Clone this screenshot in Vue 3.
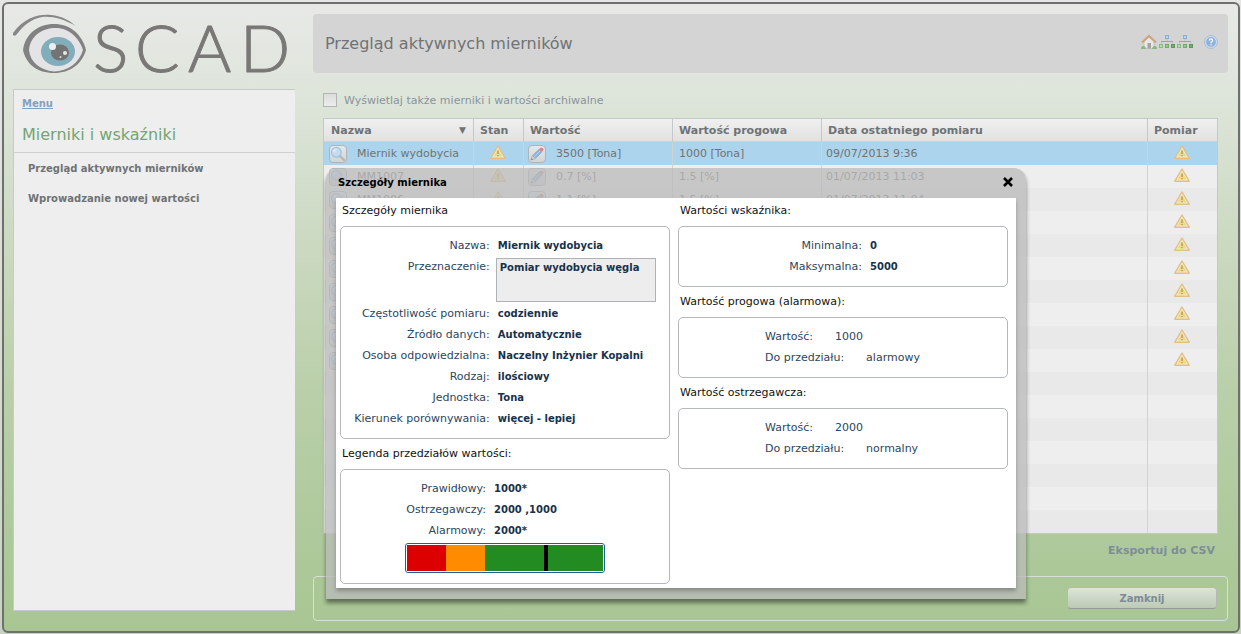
<script setup>
import { ref } from 'vue'

const showArchive = ref(false)
const purpose = ref('Pomiar wydobycia węgla')

const columns = ['Nazwa', 'Stan', 'Wartość', 'Wartość progowa', 'Data ostatniego pomiaru', 'Pomiar']

const measures = [
  { name: 'Miernik wydobycia', value: '3500 [Tona]', limit: '1000 [Tona]', date: '09/07/2013 9:36' },
  { name: 'MM1007', value: '0.7 [%]', limit: '1.5 [%]', date: '01/07/2013 11:03' },
  { name: 'MM1006', value: '1.1 [%]', limit: '1.5 [%]', date: '01/07/2013 11:04' },
  ...Array.from({ length: 7 }, () => ({ name: '', value: '', limit: '', date: '' }))
]
const emptyRows = 7

const details = [
  { label: 'Częstotliwość pomiaru:', value: 'codziennie' },
  { label: 'Źródło danych:', value: 'Automatycznie' },
  { label: 'Osoba odpowiedzialna:', value: 'Naczelny Inżynier Kopalni' },
  { label: 'Rodzaj:', value: 'ilościowy' },
  { label: 'Jednostka:', value: 'Tona' },
  { label: 'Kierunek porównywania:', value: 'więcej - lepiej' }
]
const legend = [
  { label: 'Prawidłowy:', value: '1000*' },
  { label: 'Ostrzegawczy:', value: '2000 ,1000' },
  { label: 'Alarmowy:', value: '2000*' }
]
const ranges = [
  { color: '#dc0000', share: 20 },
  { color: '#ff8c00', share: 20 },
  { color: '#228b22', share: 60 }
]
const marker = 70
const thresholds = [
  { title: 'Wartość progowa (alarmowa):', value: '1000', range: 'alarmowy' },
  { title: 'Wartość ostrzegawcza:', value: '2000', range: 'normalny' }
]
</script>

<template>
  <div class="frame">
    <svg class="defs" aria-hidden="true">
      <defs>
        <symbol id="warn" viewBox="0 0 16 14">
          <path d="M8 1 L15.2 13.2 H.8 Z" fill="#f2ecd0" stroke="#e2bf86" stroke-width="1.4" stroke-linejoin="round" />
          <path d="M8 4 L12.6 11.6 H3.4 Z" fill="#e8da86" />
          <path d="M8 5.4 V9 M8 10 V11.2" stroke="#c2a055" stroke-width="1.5" />
        </symbol>
        <symbol id="lens" viewBox="0 0 16 16">
          <path d="M9.5 9.5 L14 14" stroke="#c4b5b0" stroke-width="2.4" stroke-linecap="round" />
          <circle cx="6.3" cy="6.3" r="4.9" fill="#c4dcf0" stroke="#a3c0dc" stroke-width="1.2" />
          <path d="M3.6 6.3 A2.8 2.8 0 0 1 6.3 3.6" fill="none" stroke="#e8f3fb" stroke-width="1.2" />
        </symbol>
        <symbol id="pencil" viewBox="0 0 16 16">
          <path d="M2 14 L3.2 10 L10 3.2 L12.8 6 L6 12.8 Z" fill="#8fb4dc" stroke="#8ba8c6" stroke-width=".8" />
          <path d="M2 14 L3.2 10 L6 12.8 Z" fill="#dccfb8" />
          <path d="M2 14 L2.6 12 L4 13.4 Z" fill="#777" />
          <path d="M5 11 L11.2 4.8" stroke="#b6d2ee" stroke-width="1" />
          <path d="M10 3.2 L11.5 1.7 Q12.5 1 13.5 2 L14.2 2.7 Q15 3.7 14.2 4.6 L12.8 6 Z" fill="#e08585" />
        </symbol>
        <symbol id="tree" viewBox="0 0 16 14">
          <path d="M8 4 V6.500" fill="none" stroke="#c0c0c0" />
          <path d="M2 6.500 H14" fill="none" stroke="#a0a0a0" />
          <path d="M2.500 7 V9 M13.500 7 V9" fill="none" stroke="#c4c4c4" />
          <rect x="6.5" y=".5" width="3" height="3" fill="#b8d4f0" stroke="#88afd8" />
          <rect x=".5" y="9.500" width="3" height="3" fill="#b4deac" stroke="#84bd82" />
          <rect x="6.5" y="9.500" width="3" height="3" fill="#92cb8c" stroke="#6fac6c" />
          <rect x="12.5" y="9.500" width="3" height="3" fill="#74b070" stroke="#5c965c" />
        </symbol>
      </defs>
    </svg>

    <aside class="side">
      <svg class="logo" viewBox="0 0 282 64" role="img" aria-label="OSCAD">
        <path d="M0 19 C12 3 26 0 38 1 C49 2 57 7 63 12 C50 5 40 2 29 3 C18 5 11 11 4 20 Q2 23 0 21 Z" fill="#878787" />
        <path d="M10 36 C12 20 25 10 41 10 C57 10 69 20 73 36 C69 50 57 59 41 59 C24 59 13 50 10 36 Z" fill="#828282" />
        <path d="M16 36 C17 22 29 14 43 14 C56 14 66 24 70 36 C66 49 55 57 41 57.500 C27 56 17 48 16 36 Z" fill="#e4e4e6" />
        <ellipse cx="45" cy="37.500" rx="17" ry="14.500" fill="#82adba" />
        <ellipse cx="47" cy="38.500" rx="9" ry="8" fill="#737373" />
        <circle cx="39.500" cy="32.500" r="3.500" fill="#eaf0f1" />
        <circle cx="52" cy="39" r="2" fill="#e4e9ea" />
        <circle cx="47.500" cy="43" r="1" fill="#d8dddd" />
        <text class="wordmark" y="58" x="80 122 175 227">SCAD</text>
      </svg>
      <nav class="menu">
        <div class="menu-head">
          <a class="menu-link" href="#">Menu</a>
          <h2>Mierniki i wskaźniki</h2>
        </div>
        <ul>
          <li><a href="#">Przegląd aktywnych mierników</a></li>
          <li><a href="#">Wprowadzanie nowej wartości</a></li>
        </ul>
      </nav>
    </aside>

    <main class="main">
      <header class="title-bar">
        <h1>Przegląd aktywnych mierników</h1>
        <div class="tools">
          <a href="#" aria-label="Strona główna">
            <svg width="16" height="16" viewBox="0 0 16 16">
              <path d="M3 7 V14.500 H13 V7 L8 3 Z" fill="#e9e7e3" stroke="#b9b3ab" stroke-width=".6" />
              <rect x="6.500" y="9" width="3.500" height="5.500" fill="#a5a3a3" />
              <path d="M1 8.500 L8 2 L15 8.500" fill="none" stroke="#c9a581" stroke-width="2.200" stroke-linejoin="round" />
              <path d="M0 15 Q0 12 2.500 12 Q4.500 12 5 15 Z M11 15 Q11.500 12 13.500 12 Q16 12 16 15 Z" fill="#86b980" />
            </svg>
          </a>
          <a href="#" aria-label="Struktura"><svg width="16" height="14"><use href="#tree" /></svg></a>
          <a href="#" aria-label="Drzewo"><svg width="16" height="14"><use href="#tree" /></svg></a>
          <a class="help" href="#" aria-label="Pomoc">
            <svg width="14" height="14" viewBox="0 0 14 14">
              <circle cx="7" cy="7" r="6.400" fill="#d5e1ef" stroke="#a3bbd8" />
              <circle cx="7" cy="7" r="4.900" fill="#8fb2db" />
              <path d="M5.300 5.600 Q5.400 4 7 4 Q8.700 4 8.700 5.500 Q8.700 6.400 7 7.300 V8.200 M7 9.200 V10.500" fill="none" stroke="#f1f5fa" stroke-width="1.300" />
            </svg>
          </a>
        </div>
      </header>

      <section class="content">
        <label class="archive">
          <input v-model="showArchive" type="checkbox" />
          <span>Wyświetlaj także mierniki i wartości archiwalne</span>
        </label>

        <table class="grid">
          <colgroup>
            <col class="c-name" /><col class="c-state" /><col class="c-value" /><col class="c-limit" /><col /><col class="c-measure" />
          </colgroup>
          <thead>
            <tr>
              <th v-for="(c, i) in columns" :key="c" scope="col">
                <div class="th"><span>{{ c }}</span><span v-if="i === 0" class="sort">▼</span></div>
              </th>
            </tr>
          </thead>
          <tbody>
            <tr v-for="(m, i) in measures" :key="i" :class="{ selected: i === 0 }">
              <td>
                <div class="cell">
                  <button type="button" class="mini" aria-label="Szczegóły"><svg width="16" height="16"><use href="#lens" /></svg></button>
                  <span>{{ m.name }}</span>
                </div>
              </td>
              <td><div class="cell icon"><svg width="16" height="14"><use href="#warn" /></svg></div></td>
              <td>
                <div class="cell value">
                  <button type="button" class="mini" aria-label="Edytuj"><svg width="16" height="16"><use href="#pencil" /></svg></button>
                  <span>{{ m.value }}</span>
                </div>
              </td>
              <td><div class="cell limit">{{ m.limit }}</div></td>
              <td><div class="cell date">{{ m.date }}</div></td>
              <td><div class="cell icon"><svg width="16" height="14"><use href="#warn" /></svg></div></td>
            </tr>
            <tr v-for="n in emptyRows" :key="'e' + n">
              <td v-for="c in columns" :key="c"></td>
            </tr>
          </tbody>
        </table>

        <div class="export"><a href="#">Eksportuj do CSV</a></div>
      </section>

      <footer class="actions"><button type="button">Zamknij</button></footer>
    </main>

    <div class="dialog" role="dialog" aria-labelledby="dialog-title">
      <div class="dialog-head">
        <strong id="dialog-title">Szczegóły miernika</strong>
        <button type="button" aria-label="Zamknij okno">
          <svg width="10" height="10" viewBox="0 0 10 10"><path d="M1 1 L9 9 M9 1 L1 9" stroke="#000" stroke-width="2.600" /></svg>
        </button>
      </div>
      <div class="dialog-body">
        <div class="col">
          <h3>Szczegóły miernika</h3>
          <div class="box">
            <div class="fields details">
              <span class="lab">Nazwa:</span><b>Miernik wydobycia</b>
              <label class="lab" for="purpose">Przeznaczenie:</label>
              <textarea id="purpose" v-model="purpose" readonly></textarea>
              <template v-for="d in details" :key="d.label">
                <span class="lab">{{ d.label }}</span><b>{{ d.value }}</b>
              </template>
            </div>
          </div>
          <h3>Legenda przedziałów wartości:</h3>
          <div class="box">
            <div class="fields legend">
              <template v-for="l in legend" :key="l.label">
                <span class="lab">{{ l.label }}</span><b>{{ l.value }}</b>
              </template>
            </div>
            <div class="gauge">
              <div class="track">
                <span v-for="r in ranges" :key="r.color" :style="{ background: r.color, width: r.share + '%' }"></span>
                <i :style="{ left: marker + '%' }"></i>
              </div>
            </div>
          </div>
        </div>
        <div class="col">
          <h3>Wartości wskaźnika:</h3>
          <div class="box">
            <div class="fields limits">
              <span class="lab">Minimalna:</span><b>0</b>
              <span class="lab">Maksymalna:</span><b>5000</b>
            </div>
          </div>
          <template v-for="t in thresholds" :key="t.title">
            <h3>{{ t.title }}</h3>
            <div class="box threshold">
              <p><span>Wartość:</span><span>{{ t.value }}</span></p>
              <p><span>Do przedziału:</span><span>{{ t.range }}</span></p>
            </div>
          </template>
        </div>
      </div>
    </div>
  </div>
</template>

<style>
body {
  background: linear-gradient(#e6e7e5, #c9d2c4);
}
</style>

<style scoped>
* {
  box-sizing: border-box;
}
.frame {
  position: relative;
  display: flex;
  gap: 18px;
  min-height: calc(100vh - 3px);
  margin: 2px 1px 1px 2px;
  padding: 10px 10px 10px 9px;
  border: 2px solid #6e706e;
  border-radius: 6px;
  background: linear-gradient(#e8e9e7, #dce4d8 17%, #cedbc5 34%, #b9cfa9 62%, #aec99b 85%, #a8c693);
  font-family: Verdana, "DejaVu Sans", sans-serif;
  font-size: 11px;
  color: #6f7375;
}
.defs {
  position: absolute;
  width: 0;
  height: 0;
}
h1, h2, h3, ul, p {
  margin: 0;
  padding: 0;
  font-weight: normal;
}
a {
  color: inherit;
  text-decoration: none;
}
button, input, textarea {
  font: inherit;
}
.side {
  flex: 0 0 282px;
  display: flex;
  flex-direction: column;
}
.logo {
  display: block;
  width: 282px;
  height: 64px;
  overflow: visible;
}
.wordmark {
  font-family: Lato, "DejaVu Sans", sans-serif;
  font-weight: 300;
  font-size: 66px;
  fill: #7a7876;
  stroke: #7a7876;
  stroke-width: 1;
  stroke-linejoin: round;
}
.menu {
  flex: 1;
  margin-top: 11px;
  margin-bottom: 10px;
  border: 1px solid #c6caca;
  border-right: 0;
  background: #eee;
}
.menu-head {
  padding: 6px 8px 6px;
  border-bottom: 1px solid #cfd1d1;
}
.menu-link {
  display: block;
  line-height: 16px;
  font-size: 10px;
  font-weight: bold;
  color: #84a1be;
  text-decoration: underline;
}
.menu-head h2 {
  margin-top: 12px;
  line-height: 22px;
  font-size: 16px;
  color: #74a572;
}
.menu ul {
  padding-top: 1px;
  list-style: none;
}
.menu li {
  line-height: 30px;
  padding-left: 14px;
  font-size: 10px;
  font-weight: bold;
}
.main {
  flex: 1;
  min-width: 0;
  display: flex;
  flex-direction: column;
}
.title-bar {
  display: flex;
  align-items: center;
  justify-content: space-between;
  height: 59px;
  padding: 0 10px 0 12px;
  border-radius: 4px;
  background: #d4d4d4;
}
.title-bar h1 {
  font-size: 16px;
}
.tools {
  display: flex;
  align-items: center;
  gap: 2px;
  padding-bottom: 4px;
}
.tools svg {
  display: block;
}
.help {
  margin-left: 9px;
}
.content {
  flex: 1;
  padding: 18px 10px 0;
}
.archive {
  display: flex;
  align-items: center;
  gap: 7px;
  height: 18px;
  color: #89949c;
}
.archive input {
  appearance: none;
  width: 14px;
  height: 14px;
  margin: 0;
  border: 1px solid #b3b5b4;
  background: linear-gradient(#dcdcdc, #ececec);
}
.grid {
  width: 100%;
  margin-top: 9px;
  table-layout: fixed;
  border-collapse: separate;
  border-spacing: 0;
  border: 1px solid #c5c8ca;
}
.c-name { width: 150px; }
.c-state { width: 50px; }
.c-value { width: 149px; }
.c-limit { width: 149px; }
.c-measure { width: 69px; }
.grid th {
  height: 23px;
  padding: 0;
  border-right: 1px solid #c5c8ca;
  border-bottom: 1px solid #d0d2d3;
  background: linear-gradient(#f0f0f0, #e1e1e1);
  text-align: left;
  color: #6f7375;
}
.th {
  display: flex;
  align-items: center;
  justify-content: space-between;
  padding: 0 7px 0 6px;
  white-space: nowrap;
}
.grid th:first-child .th {
  padding-left: 7px;
}
.sort {
  font-size: 9px;
}
.grid td {
  height: 23px;
  padding: 0;
  border-right: 1px solid #d2d2d2;
  background: #eee;
}
.grid th:last-child, .grid td:last-child {
  border-right: 0;
}
.grid tbody tr:nth-child(odd) td {
  background: #e9e9e9;
}
.grid tbody tr.selected td {
  background: #acd4ec;
}
.cell {
  display: flex;
  align-items: center;
  gap: 10px;
  height: 23px;
  padding-left: 5px;
  white-space: nowrap;
}
.cell svg {
  display: block;
}
.cell.icon {
  align-items: flex-start;
  justify-content: center;
  padding: 3px 1px 0 0;
}
.cell.value { padding-left: 4px; }
.cell.limit { padding-left: 6px; }
.cell.date { padding-left: 4px; }
.mini {
  width: 18px;
  height: 18px;
  padding: 0;
  border: 1px solid #adb5ba;
  border-radius: 4px;
  background: linear-gradient(#e3e8ea, #cfd6d9);
}
.export {
  padding: 7px 3px 0 0;
  line-height: 20px;
  text-align: right;
  font-weight: bold;
  color: #7e8e96;
}
.actions {
  display: flex;
  justify-content: flex-end;
  align-items: center;
  height: 45px;
  padding: 0 10px 1px 0;
  border: 1px solid #dadfd8;
  border-radius: 4px;
}
.actions button {
  width: 150px;
  height: 22px;
  padding: 0;
  border: 1px solid #b5b9b5;
  border-bottom-color: #989c98;
  border-radius: 4px;
  background: linear-gradient(#dde4da, #bccab4);
  font-size: 10px;
  font-weight: bold;
  color: #7d8b94;
}
.dialog {
  position: absolute;
  left: 322px;
  top: 164px;
  width: 700px;
  padding: 0 10px 11px;
  border-radius: 12px 12px 0 0;
  background: rgba(185, 185, 185, 0.75);
  box-shadow: 0 4px 4px rgba(0, 0, 0, 0.45);
  color: #2c465e;
}
.dialog-head {
  display: flex;
  align-items: center;
  justify-content: space-between;
  height: 30px;
  padding: 0 3px 2px 2px;
  font-size: 10px;
  color: #000;
}
.dialog-head button {
  padding: 0;
  border: 0;
  background: none;
}
.dialog-head svg {
  display: block;
}
.dialog-body {
  display: flex;
  gap: 8px;
  padding: 0 8px 4px 4px;
  background: #fff;
  box-shadow: 0 3px 4px rgba(0, 0, 0, 0.25);
}
.col {
  flex: 1;
  min-width: 0;
}
h3 {
  padding: 0 2px 3px;
  line-height: 25px;
  font-size: 11px;
  color: #111;
}
.box {
  margin-bottom: 2px;
  padding: 8px 0 9px;
  border: 1px solid #b4b8bb;
  border-radius: 5px;
}
.col .box:last-child {
  margin-bottom: 0;
}
.fields {
  display: grid;
  line-height: 21px;
  white-space: nowrap;
}
.fields b {
  font-size: 10px;
  color: #17324c;
}
.lab {
  text-align: right;
}
.details {
  grid-template-columns: auto 160px;
  justify-content: center;
  column-gap: 6px;
}
.details b {
  padding-left: 2px;
}
.details textarea {
  display: block;
  width: 160px;
  height: 44px;
  margin: 2px 0 1px;
  padding: 2px 3px;
  border: 1px solid #b0b3b5;
  border-radius: 0;
  background: #ededed;
  resize: none;
  outline: none;
  line-height: 14px;
  font-size: 10px;
  font-weight: bold;
  color: #17324c;
}
.legend {
  grid-template-columns: 145px 1fr;
  column-gap: 8px;
}
.limits {
  grid-template-columns: 183px 1fr;
  column-gap: 8px;
}
.gauge {
  width: 200px;
  height: 30px;
  margin: 2px auto 1px;
  padding: 1px;
  border: 1px solid #1f5f9f;
  border-radius: 3px;
  background: #fff;
}
.track {
  position: relative;
  display: flex;
  height: 100%;
}
.track i {
  position: absolute;
  top: 0;
  bottom: 0;
  width: 4px;
  background: #000;
}
.threshold p {
  display: flex;
  gap: 22px;
  padding-left: 86px;
  line-height: 21px;
}
</style>
